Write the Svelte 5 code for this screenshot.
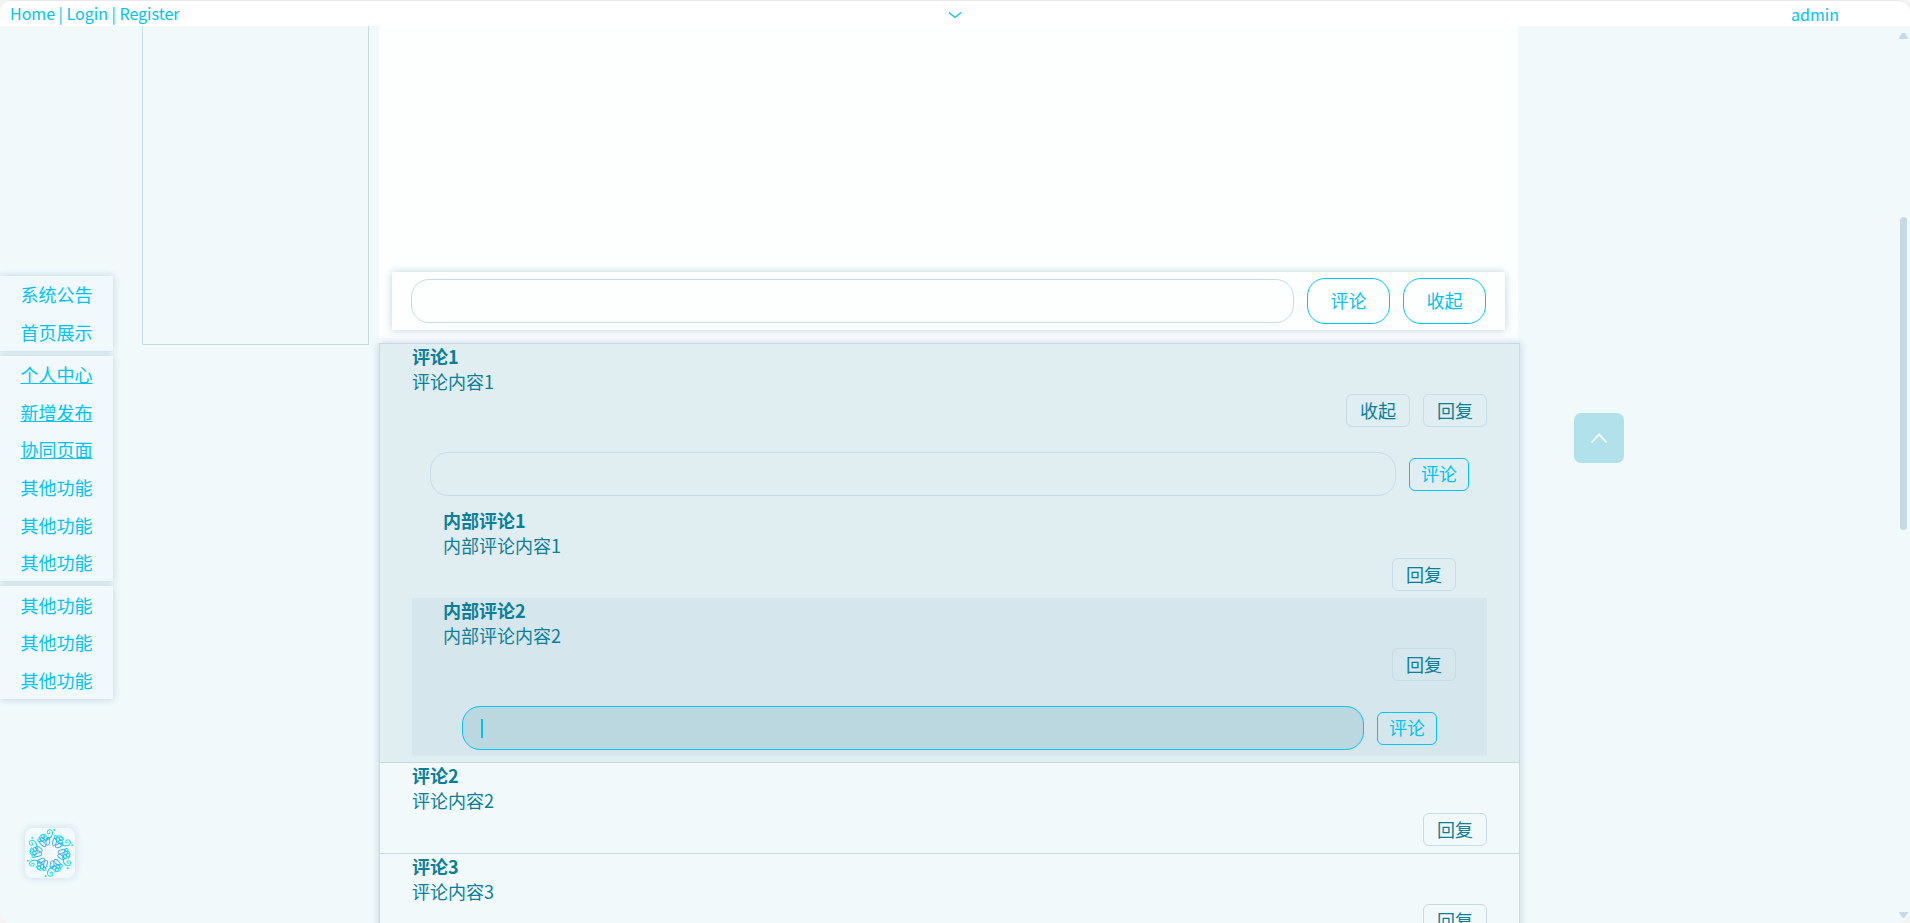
<script>
  const menus = [
    [{ text: '系统公告' }, { text: '首页展示' }],
    [
      { text: '个人中心', href: '#profile' },
      { text: '新增发布', href: '#publish' },
      { text: '协同页面', href: '#collaborate' },
      { text: '其他功能' },
      { text: '其他功能' },
      { text: '其他功能' }
    ],
    [{ text: '其他功能' }, { text: '其他功能' }, { text: '其他功能' }]
  ];

  const comments = [
    {
      title: '评论1',
      content: '评论内容1',
      open: true,
      replies: [
        { title: '内部评论1', content: '内部评论内容1' },
        { title: '内部评论2', content: '内部评论内容2', open: true }
      ]
    },
    { title: '评论2', content: '评论内容2' },
    { title: '评论3', content: '评论内容3' }
  ];

  const petals = [-23, 37, 97, 157, 217, 277];
</script>

{#snippet field(name, active = false)}
  <label class="field" class:active>
    {#if active}<span class="caret"></span>{/if}
    <input type="text" aria-label={name} />
  </label>
{/snippet}

<div class="window">
  <header>
    <nav class="links">
      <a href="#home">Home</a> | <a href="#login">Login</a> | <a href="#register">Register</a>
    </nav>
    <button class="expand" aria-label="展开">
      <svg width="14" height="8" viewBox="0 0 14 8"><path d="M1 1.5 L7 6.5 L13 1.5" /></svg>
    </button>
    <a class="user" href="#user">admin</a>
  </header>

  <div class="page">
    <aside class="side">
      <nav class="menus">
        {#each menus as group}
          <ul style="flex-grow: {group.length}">
            {#each group as item}
              <li>
                {#if item.href}<a href={item.href}>{item.text}</a>{:else}<button>{item.text}</button>{/if}
              </li>
            {/each}
          </ul>
        {/each}
      </nav>
      <button class="badge" aria-label="主题">
        <svg width="50" height="50" viewBox="-25 -25 50 50">
          <defs>
            <radialGradient id="frost" gradientUnits="userSpaceOnUse" cx="0" cy="0" r="24">
              <stop offset="0.35" stop-color="#6fa6f3" />
              <stop offset="0.6" stop-color="#1fbcf0" />
              <stop offset="0.88" stop-color="#25e2dc" />
            </radialGradient>
          </defs>
          {#each petals as angle}
            <g transform="rotate({angle})">
              <ellipse cx="-3" cy="-11.5" rx="1.8" ry="3.8" transform="rotate(-24 -3 -11.5)" />
              <ellipse cx="2.6" cy="-11.5" rx="1.8" ry="3.8" transform="rotate(28 2.6 -11.5)" />
              <circle cx="-2" cy="-15.5" r="1.9" />
              <circle cx="1.8" cy="-15.5" r="1.9" />
              <circle cx="0" cy="-18" r="1.7" />
              <circle cx="-5" cy="-16" r="1.5" />
              <path d="M0 -13 C5 -13 10.5 -15 10.5 -19 C10.5 -22.5 5.5 -22.5 5.5 -19.5 C5.5 -17.5 8 -17.5 8 -19.5" />
              <path d="M-4 -18 C-3 -20 0 -21 3 -19" />
              <circle cx="13" cy="-19.5" r="0.5" />
            </g>
          {/each}
        </svg>
      </button>
    </aside>

    <section class="panel" aria-label="侧栏"></section>

    <main>
      <form class="composer">
        {@render field('评论')}
        <button type="button" class="pill">评论</button>
        <button type="button" class="pill">收起</button>
      </form>

      <section class="comments">
        {#each comments as comment}
          <article class="comment" class:open={comment.open}>
            <h3>{comment.title}</h3>
            <p>{comment.content}</p>
            <div class="actions">
              {#if comment.open}<button class="small">收起</button>{/if}
              <button class="small">回复</button>
            </div>
            {#if comment.open}
              <form class="reply">
                {@render field('回复' + comment.title)}
                <button type="button" class="send">评论</button>
              </form>
              <div class="replies">
                {#each comment.replies as inner}
                  <article class="inner" class:open={inner.open}>
                    <h3>{inner.title}</h3>
                    <p>{inner.content}</p>
                    <div class="actions"><button class="small">回复</button></div>
                    {#if inner.open}
                      <form class="reply">
                        {@render field('回复' + inner.title, true)}
                        <button type="button" class="send">评论</button>
                      </form>
                    {/if}
                  </article>
                {/each}
              </div>
            {/if}
          </article>
        {/each}
      </section>
    </main>

    <div class="right">
      <button class="top" aria-label="返回顶部">
        <svg width="18" height="12" viewBox="0 0 18 12"><path d="M2 10 L9 2.5 L16 10" /></svg>
      </button>
    </div>

    <div class="scrollbar" aria-hidden="true">
      <svg width="9" height="6" viewBox="0 0 9 6"><path d="M0 6 V5 L3 0 H6 L9 5 V6 Z" /></svg>
      <div class="track"><div class="thumb"></div></div>
      <svg width="9" height="6" viewBox="0 0 9 6"><path d="M0 0 H9 V1 L5 6 H4 L0 1 Z" /></svg>
    </div>
  </div>
</div>

<style>
  :global(body) {
    background: #f3f3f3;
  }

  .window {
    --cyan: #00c3f0;
    --teal: #0b7f98;
    --line: #c4dbe8;
    --shade: 0 0 8px #bdd3de;
    box-sizing: border-box;
    height: 100vh;
    display: flex;
    flex-direction: column;
    overflow: hidden;
    border-top: 1px solid #e9e9e9;
    border-radius: 12px;
    background: #f1f9fb;
    color: var(--cyan);
    font: 18px/25px "Noto Sans CJK SC", sans-serif;
  }

  button,
  input {
    box-sizing: border-box;
    margin: 0;
    padding: 0;
    border: 0;
    background: none;
    color: inherit;
    font: inherit;
  }

  button {
    cursor: pointer;
  }

  svg {
    display: block;
    fill: none;
  }

  a {
    color: inherit;
  }

  header {
    display: grid;
    grid-template-columns: 1fr auto 1fr;
    align-items: center;
    height: 25px;
    flex: none;
    padding: 0 71px 0 10px;
    background: #fff;
    font-size: 16px;
  }

  header a {
    text-decoration: none;
  }

  .links {
    padding-bottom: 2px;
  }

  .expand {
    margin-left: 61px;
  }

  .expand path {
    stroke: var(--cyan);
    stroke-width: 1.3;
  }

  .user {
    justify-self: end;
  }

  .page {
    flex: 1;
    min-height: 0;
    display: grid;
    grid-template-columns: 142px 227px minmax(0, 1fr) 380px 12px;
    grid-template-rows: minmax(0, 1fr);
  }

  .side {
    display: flex;
    flex-direction: column;
    justify-content: space-between;
    padding: 250px 29px 45px 0;
  }

  .menus {
    display: flex;
    flex-direction: column;
    gap: 5px;
    min-height: 423px;
  }

  ul {
    display: flex;
    flex-direction: column;
    flex-basis: 0;
    margin: 0;
    padding: 0;
    list-style: none;
    background: #f1f9fc;
    box-shadow: var(--shade);
  }

  li {
    flex: 1;
    display: flex;
    align-items: center;
    justify-content: center;
  }

  .badge {
    width: 50px;
    height: 50px;
    margin-left: 25px;
    border-radius: 8px;
    background: #f3fafd;
    box-shadow: 0 0 8px #c9dde6;
  }

  .badge path,
  .badge ellipse,
  .badge circle {
    stroke: url(#frost);
    stroke-width: 1;
    stroke-linecap: round;
  }

  .panel {
    align-self: start;
    box-sizing: border-box;
    height: 319px;
    border: solid var(--line);
    border-width: 0 1px 1px;
  }

  main {
    margin-left: 10px;
    padding-top: 246px;
    background: linear-gradient(#fcfffe 80%, #fdfdff) 0 0 / 100% 318px no-repeat;
  }

  .composer {
    display: flex;
    align-items: center;
    gap: 13px;
    margin: 0 13px;
    padding: 6px 19px;
    background: #fdfffe;
    box-shadow: var(--shade);
  }

  .field {
    flex: 1;
    box-sizing: border-box;
    height: 44px;
    display: flex;
    align-items: center;
    padding: 0 18px;
    border: 1px solid var(--line);
    border-radius: 18px;
  }

  .field input {
    flex: 1;
    min-width: 0;
    outline: none;
  }

  .field.active {
    border-color: var(--cyan);
    background: #bbd8e0;
  }

  .caret {
    width: 2px;
    height: 19px;
    background: var(--cyan);
  }

  .pill {
    width: 83px;
    height: 46px;
    padding-bottom: 1px;
    border: 1px solid var(--cyan);
    border-radius: 18px;
  }

  .comments {
    margin: 13px -2px 0 0;
    border: 1px solid var(--line);
    box-shadow: var(--shade);
    background: #f1f9fb;
    color: var(--teal);
  }

  .comment {
    padding: 0 32px 7px;
    border-bottom: 1px solid var(--line);
  }

  .comment.open {
    padding-bottom: 6px;
    background: #e0edf1;
  }

  h3,
  p {
    margin: 0;
    font-size: 18px;
    line-height: 25px;
  }

  .actions {
    display: flex;
    justify-content: flex-end;
    gap: 13px;
  }

  .small,
  .send {
    height: 33px;
    border: 1px solid var(--line);
    border-radius: 6px;
  }

  .small {
    width: 64px;
  }

  .send {
    width: 60px;
    padding-bottom: 1px;
    border-color: var(--cyan);
    color: var(--cyan);
  }

  .reply {
    display: flex;
    align-items: center;
    gap: 13px;
    margin: 25px 18px 0;
  }

  .replies {
    padding-top: 12px;
  }

  .inner {
    padding: 0 31px 7px;
  }

  .inner.open {
    padding-bottom: 6px;
    background: #d5e6ec;
  }

  .inner .reply {
    margin: 25px 19px 0;
  }

  .top {
    display: grid;
    place-items: center;
    width: 50px;
    height: 50px;
    margin: 387px 0 0 56px;
    border-radius: 7px;
    background: #b1e2eb;
  }

  .top path {
    stroke: #fff;
    stroke-width: 1.6;
    stroke-linecap: round;
  }

  .scrollbar {
    display: flex;
    flex-direction: column;
    align-items: center;
    padding: 7px 2px 5px 0;
  }

  .scrollbar path {
    fill: #c4dae6;
  }

  .track {
    flex: 1;
    padding-top: 178px;
  }

  .thumb {
    width: 7px;
    height: 45%;
    border-radius: 4px;
    background: #c4dae6;
  }
</style>
